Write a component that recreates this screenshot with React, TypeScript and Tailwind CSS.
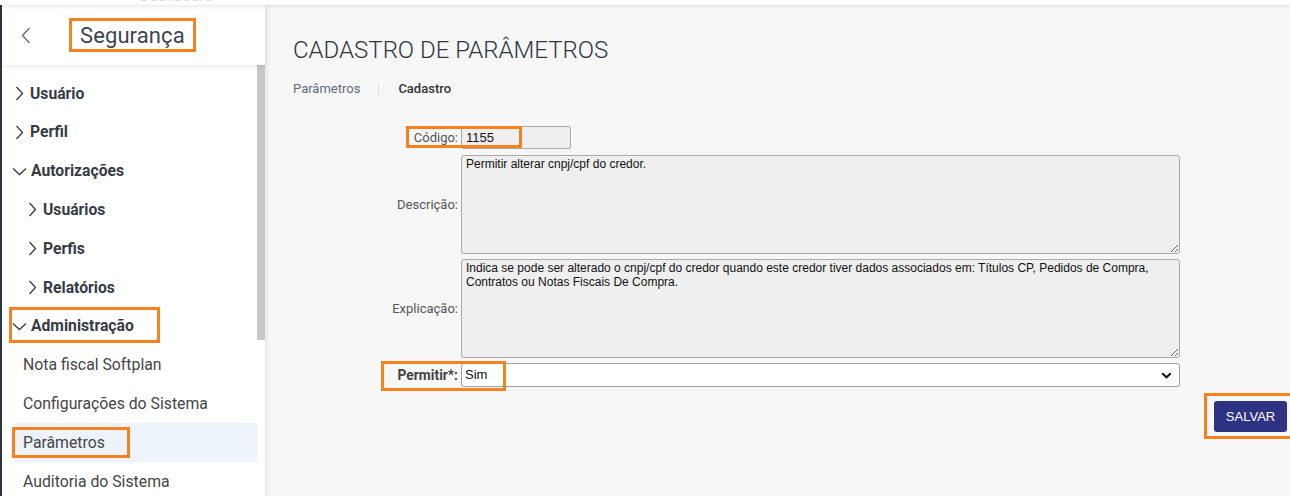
import React from 'react';

const ORANGE = 'border-[3px] border-[#f5821f]';

function ChevronRight({ className = '' }: { className?: string }) {
  return (
    <svg width="9" height="15" viewBox="0 0 9 15" className={className} fill="none">
      <path d="M1.5 1 L7.5 7.5 L1.5 14" stroke="#3a3a3a" strokeWidth="1.3" />
    </svg>
  );
}

function ChevronDown({ className = '' }: { className?: string }) {
  return (
    <svg width="15" height="9" viewBox="0 0 15 9" className={className} fill="none">
      <path d="M1 1.5 L7.5 7.5 L14 1.5" stroke="#3a3a3a" strokeWidth="1.3" />
    </svg>
  );
}

type MenuItem = {
  label: string;
  kind: 'closed' | 'open' | 'leaf';
  level: 1 | 2;
  active?: boolean;
};

const menu: MenuItem[] = [
  { label: 'Usuário', kind: 'closed', level: 1 },
  { label: 'Perfil', kind: 'closed', level: 1 },
  { label: 'Autorizações', kind: 'open', level: 1 },
  { label: 'Usuários', kind: 'closed', level: 2 },
  { label: 'Perfis', kind: 'closed', level: 2 },
  { label: 'Relatórios', kind: 'closed', level: 2 },
  { label: 'Administração', kind: 'open', level: 1 },
  { label: 'Nota fiscal Softplan', kind: 'leaf', level: 2 },
  { label: 'Configurações do Sistema', kind: 'leaf', level: 2 },
  { label: 'Parâmetros', kind: 'leaf', level: 2, active: true },
  { label: 'Auditoria do Sistema', kind: 'leaf', level: 2 },
];

function SideItem({ item }: { item: MenuItem }) {
  if (item.kind === 'leaf') {
    return (
      <div
        className={`h-[38.8px] ml-[12px] pl-[9px] flex items-center text-[15.8px] text-[#454545] ${
          item.active ? 'bg-[#edf3fb]' : ''
        }`}
      >
        {item.label}
      </div>
    );
  }
  const indent = item.level === 1 ? 'pl-[12px]' : 'pl-[25px]';
  return (
    <div className={`h-[38.8px] flex items-center ${indent} text-[15.7px] font-bold text-[#363b44]`}>
      {item.kind === 'closed' ? (
        <ChevronRight className="mr-[6px] ml-[1px]" />
      ) : (
        <ChevronDown className="mr-[4px] -ml-[2px] mt-[1px]" />
      )}
      <span>{item.label}</span>
    </div>
  );
}

export default function App() {
  return (
    <div className="relative w-[1290px] h-[496px] overflow-hidden bg-[#f7f7f7] flex flex-col font-['Roboto',sans-serif]">
      {/* top strip */}
      <div className="relative z-20 h-[5px] bg-white shadow-[0_1px_4px_rgba(0,0,0,0.12)] overflow-hidden">
        <span className="block -mt-[13px] ml-[140px] text-[15px] leading-[18px] text-[#dadada]">Dashboard</span>
      </div>

      <div className="flex flex-1 min-h-0">
        {/* sidebar */}
        <aside className="relative z-10 w-[265px] shrink-0 bg-white border-l-2 border-[#2e3340] flex flex-col shadow-[2px_0_5px_rgba(0,0,0,0.07)]">
          <div className="relative z-10 h-[60px] shrink-0 flex items-center bg-white shadow-[0_2px_5px_rgba(0,0,0,0.08)]">
            <svg width="10" height="17" viewBox="0 0 10 17" className="ml-[19px]" fill="none">
              <path d="M8.5 1 L1.5 8.5 L8.5 16" stroke="#6b6b6b" strokeWidth="1.3" />
            </svg>
            <span className="ml-[49px] text-[22px] text-[#3b4350] tracking-[0.1px]">Segurança</span>
          </div>
          <div className="flex flex-1 min-h-0">
            <nav className="flex-1 pt-[9px]">
              {menu.map((m) => (
                <SideItem key={m.label} item={m} />
              ))}
            </nav>
            <div className="w-[8px] shrink-0">
              <div className="h-[275px] bg-[#c8c8c8]" />
            </div>
          </div>
        </aside>

        {/* main */}
        <main className="flex-1 pl-[28px] pr-[3px]">
          <h1 className="mt-[31px] h-[28px] leading-[28px] text-[24px] font-light text-[#2f3540]">
            CADASTRO DE PARÂMETROS
          </h1>
          <div className="mt-[16px] h-[18px] flex items-center text-[13px]">
            <span className="text-[#5c6d7e]">Parâmetros</span>
            <span className="ml-[18px] mr-[19px] w-px h-[10px] bg-[#dcdcdc]" />
            <span className="font-medium text-[#333]">Cadastro</span>
          </div>

          <form
            className="mt-[28px] grid grid-cols-[165px_719px] gap-x-[3px] text-[13px] text-[#555]"
            onSubmit={(e) => e.preventDefault()}
          >
            <label className="text-right flex items-center justify-end h-[23px]">Código:</label>
            <input
              readOnly
              value="1155"
              className="w-[110px] h-[23px] bg-[#efefef] border border-[#a9a9a9] rounded-[2px] pl-[4px] text-[13px] text-[#111] font-['Liberation_Sans',Arial,sans-serif] outline-none"
            />

            <label className="mt-[6px] flex items-center justify-end">Descrição:</label>
            <textarea
              readOnly
              defaultValue="Permitir alterar cnpj/cpf do credor."
              className="mt-[6px] h-[99px] bg-[#efefef] border border-[#a9a9a9] rounded-[3px] px-[4px] py-[1px] text-[12px] leading-[14px] text-[#111] font-['Liberation_Sans',Arial,sans-serif] outline-none resize-y"
            />

            <label className="mt-[5px] flex items-center justify-end">Explicação:</label>
            <textarea
              readOnly
              defaultValue="Indica se pode ser alterado o cnpj/cpf do credor quando este credor tiver dados associados em: Títulos CP, Pedidos de Compra, Contratos ou Notas Fiscais De Compra."
              className="mt-[5px] h-[99px] bg-[#efefef] border border-[#a9a9a9] rounded-[3px] px-[4px] py-[1px] text-[12px] leading-[14px] text-[#111] font-['Liberation_Sans',Arial,sans-serif] outline-none resize-y"
            />

            <label className="mt-[5px] flex items-center justify-end font-bold text-[13.8px] text-[#444]">Permitir*:</label>
            <div className="relative mt-[5px]">
              <select
                defaultValue="S"
                className="w-full h-[24px] appearance-none bg-white border border-[#a0a0a0] rounded-[3px] pl-[3px] text-[13px] text-[#111] font-['Liberation_Sans',Arial,sans-serif] outline-none"
              >
                <option value="S">Sim</option>
                <option value="N">Não</option>
              </select>
              <svg
                width="11"
                height="7"
                viewBox="0 0 11 7"
                className="absolute right-[8px] top-[9px] pointer-events-none"
                fill="none"
              >
                <path d="M1.2 1.2 L5.5 5.3 L9.8 1.2" stroke="#111" strokeWidth="2" />
              </svg>
            </div>
          </form>

          <div className="mt-[14px] flex justify-end">
            <button className="w-[73px] h-[31px] bg-[#2d3282] rounded-[3px] text-white text-[13px] font-['Liberation_Sans',Arial,sans-serif]">
              SALVAR
            </button>
          </div>
        </main>
      </div>

      {/* annotation boxes */}
      <div className={`absolute left-[69px] top-[18px] w-[127px] h-[34px] ${ORANGE} pointer-events-none z-30`} />
      <div className={`absolute left-[9px] top-[307px] w-[151px] h-[36px] ${ORANGE} pointer-events-none z-30`} />
      <div className={`absolute left-[12px] top-[427px] w-[118px] h-[31px] ${ORANGE} pointer-events-none z-30`} />
      <div className={`absolute left-[406px] top-[126px] w-[116px] h-[22px] ${ORANGE} pointer-events-none z-30`} />
      <div className={`absolute left-[381px] top-[361px] w-[125px] h-[30px] ${ORANGE} pointer-events-none z-30`} />
      <div className={`absolute left-[1204px] top-[393px] w-[90px] h-[46px] ${ORANGE} pointer-events-none z-30`} />
    </div>
  );
}
